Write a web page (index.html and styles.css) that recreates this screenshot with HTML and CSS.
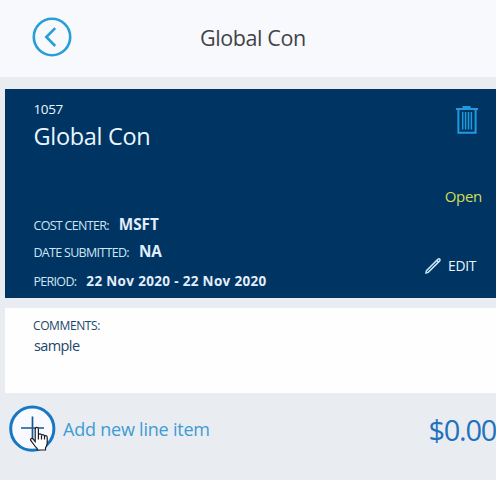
FILE: index.html
```html
<!DOCTYPE html>
<html lang="en">
<head>
<meta charset="utf-8">
<title>Global Con</title>
<link rel="stylesheet" href="styles.css">
</head>
<body>
<header class="topbar">
  <svg class="back" viewBox="0 0 40 40"><circle cx="20" cy="20" r="18.2"/><path d="M23.2 11.2 14.3 20l8.9 9"/></svg>
  <h1 class="title">Global Con</h1>
</header>
<main class="content">
  <section class="report">
    <div class="info">
      <div class="number">1057</div>
      <h2 class="name">Global Con</h2>
      <dl class="details">
        <div class="row cost"><dt>COST CENTER:</dt><dd>MSFT</dd></div>
        <div class="row date"><dt>DATE SUBMITTED:</dt><dd>NA</dd></div>
        <div class="row period"><dt>PERIOD:</dt><dd>22 Nov 2020 - 22 Nov 2020</dd></div>
      </dl>
    </div>
    <div class="actions">
      <svg class="trash" viewBox="0 0 24 30"><path d="M1 4h22M8.5 3V2h6V3M3.4 5v22.8h17.2V5"/><path class="slats" d="M7.7 7v17.5M10.6 7v17.5M13.5 7v17.5M16.4 7v17.5"/></svg>
      <div class="status">Open</div>
      <div class="edit">
        <svg class="pencil" viewBox="0 0 18 18"><path d="M2 16 2.5 13.7 14 2.2q1.2-.7 1.8 0 .7.8-.1 1.7L4.2 15.4ZM12.8 3.4l1.7 1.8"/></svg>
        <span>EDIT</span>
      </div>
    </div>
  </section>
  <section class="comments">
    <div class="label">COMMENTS:</div>
    <div class="text">sample</div>
  </section>
</main>
<footer class="footer">
  <div class="add">
    <svg class="plus" viewBox="0 0 48 48"><circle cx="24.3" cy="23.7" r="21.6"/><path d="M24.5 11.5v23M13 23h23"/></svg>
    <svg class="cursor" viewBox="0 0 20 26"><path d="M6.2 15.5V3.4q0-2 1.6-2t1.6 2v6.1q0-1.6 1.5-1.6t1.6 1.8q.2-1.2 1.5-1.1t1.5 1.9q.3-1 1.4-.8 1.3.2 1.3 1.8v5.3q0 3-1.7 5v2.2H8.2v-1.6Q6 20.5 4.8 18.5L1.9 14.7q-.9-1.4.2-2t2.1.4ZM9.4 9.5v4M12.5 9.9v3.6M15.5 10.5v3"/></svg>
    <span class="addtext">Add new line item</span>
  </div>
  <div class="total">$0.00</div>
</footer>
</body>
</html>
```
FILE: styles.css
```css
* { box-sizing: border-box; }
body {
  margin: 0;
  height: 480px;
  overflow: hidden;
  background: #e9edf2;
  font-family: "Open Sans", "Noto Sans", sans-serif;
  white-space: nowrap;
}
h1, h2, dl, dd { margin: 0; font-weight: 400; }
svg { display: block; fill: none; flex: none; }

.topbar {
  display: flex;
  height: 77px;
  padding: 17px 0 0 32px;
  background: #f8f9fd;
}
.back { width: 40px; height: 40px; stroke: #269fd9; stroke-width: 2.6; }
.title {
  margin: 5px 0 0 128px;
  font-size: 21.5px;
  line-height: 32px;
  letter-spacing: -0.4px;
  color: #414348;
}

.content { padding: 12px 0 0 5px; }
.report {
  display: flex;
  justify-content: space-between;
  height: 209px;
  padding: 10px 14px 0 28.5px;
  background: #003462;
  color: #eaf6fd;
}
.number { font-size: 13.5px; line-height: 20px; letter-spacing: -0.35px; }
.name { margin-top: 1px; font-size: 23.5px; line-height: 32px; letter-spacing: -0.3px; }
.details { margin-top: 62px; }
.row { display: flex; align-items: baseline; height: 20px; line-height: 20px; }
.date { margin-top: 7px; }
.period { margin-top: 10px; }
dt { font-size: 12.5px; letter-spacing: -0.7px; color: #cde6f6; }
dd { margin-left: 10px; font-size: 15.3px; font-weight: 700; color: #e1eefb; }
.period dd { font-size: 13.5px; letter-spacing: 0.33px; }

.actions { display: flex; flex-direction: column; align-items: flex-end; }
.trash { width: 24px; height: 30px; margin: 6px 3px 0 0; stroke: #1f9be0; stroke-width: 2; }
.slats { stroke-width: 1.5; }
.status { margin-top: 50px; font-size: 15px; line-height: 22px; letter-spacing: -0.3px; color: #d6dc56; }
.edit {
  display: flex;
  gap: 6px;
  margin: 48px 6px 0 0;
  font-size: 13.8px;
  line-height: 22px;
  letter-spacing: -0.3px;
}
.pencil { width: 18px; height: 18px; margin-top: 2px; stroke: #c9e6f7; stroke-width: 1.5; }

.comments {
  height: 85px;
  margin-top: 10px;
  padding: 8px 0 0 28px;
  background: #fefeff;
  color: #1b4668;
}
.label { font-size: 12px; line-height: 20px; letter-spacing: -0.4px; }
.text { padding-left: 1px; font-size: 14.5px; line-height: 20px; letter-spacing: -0.6px; }

.footer {
  display: flex;
  justify-content: space-between;
  padding: 12px 0 0 8px;
}
.add { position: relative; display: flex; }
.plus { width: 48px; height: 48px; stroke: #1678c4; stroke-width: 3; }
.plus circle { fill: #f8faff; }
.plus path { stroke: #16578f; stroke-width: 1.7; }
.cursor {
  position: absolute;
  left: 21px;
  top: 21px;
  width: 20px;
  height: 26px;
  fill: #fff;
  stroke: #161a26;
  stroke-width: 1.2;
}
.addtext { margin-left: 7px; font-size: 18px; line-height: 48px; letter-spacing: -0.22px; color: #3e9bd3; }
.total { font-size: 29px; font-weight: 400; line-height: 50px; letter-spacing: -1.3px; color: #1f72bd; }
```
